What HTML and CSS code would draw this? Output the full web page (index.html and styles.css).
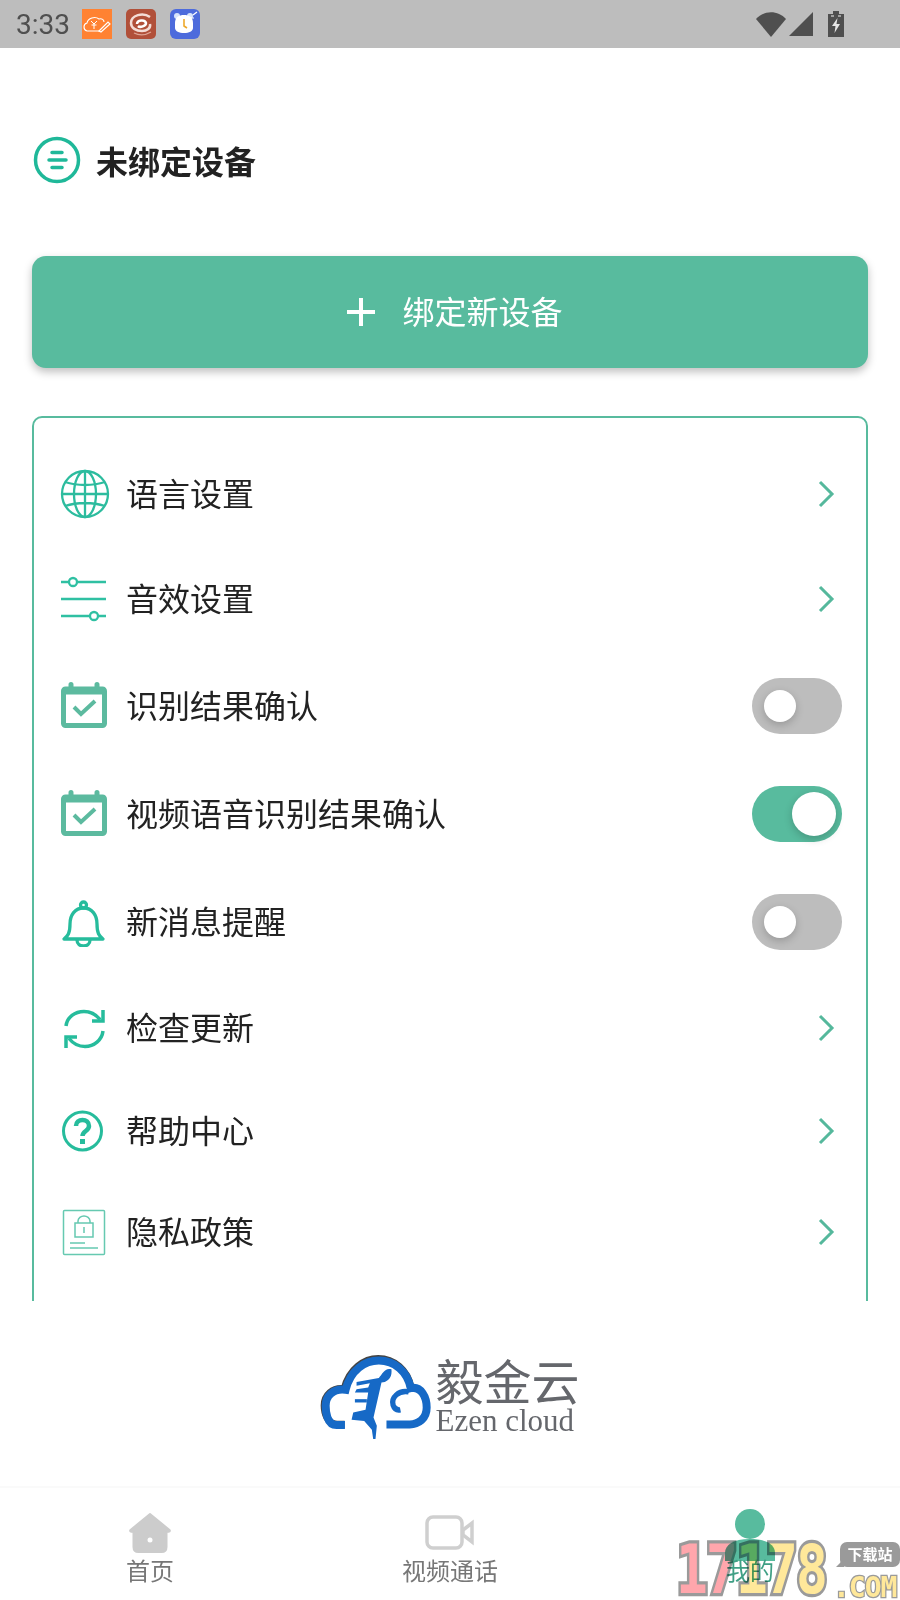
FILE: index.html
```html
<!DOCTYPE html>
<html lang="zh-CN">

<head>
    <meta charset="UTF-8">
    <meta name="viewport" content="width=device-width, initial-scale=1.0">
    <title>我的</title>
    <link rel="stylesheet" href="styles.css">
</head>

<body>
    <div class="status-bar">
        <span class="hora">3:33</span>
        <svg class="app-icon" viewBox="0 0 30 30">
            <rect width="30" height="30" fill="#ff8232"/>
            <path d="M5 22C1 21 1 15 5 14c1-5 8-7 12-4 3-1 5 1 5 3M5 22h13" fill="none" stroke="#fff" stroke-width="1.1"/>
            <path d="M9 12l3 3 3-3M12 15v5M9.500 16h5" fill="none" stroke="#fff" stroke-width="1"/>
            <path d="M17 22l9-9 2 2-9 8z" fill="none" stroke="#fff" stroke-width="1.2"/>
        </svg>
        <svg class="app-icon" viewBox="0 0 30 30">
            <rect width="30" height="30" rx="5" fill="#b15039"/>
            <path d="M24 8C17 3 5 6 5 14c0 5 5 8 11 8 5 0 9-3 8-7" fill="none" stroke="#f4dcd5" stroke-width="2.5"/>
            <path d="M11 15c0-4 8-5 9-1 0 3-6 5-8 3" fill="none" stroke="#fff" stroke-width="2.5"/>
            <path d="M8 24c6 3 12 2 17-1" fill="none" stroke="#e0a594" stroke-width="1.3"/>
        </svg>
        <svg class="app-icon" viewBox="0 0 30 30">
            <rect width="30" height="30" rx="6" fill="#4d6bdc"/>
            <circle cx="7" cy="7" r="3" fill="#d8e4fb"/>
            <circle cx="20" cy="7" r="3" fill="#d8e4fb"/>
            <path d="M5 14c0-6 4-8 9-8s9 2 9 8v5c0 3-4 5-9 5s-9-2-9-5z" fill="#fff"/>
            <path d="M14 10v7l3 2" fill="none" stroke="#eea92c" stroke-width="1.6"/>
            <path d="M23 6l4-3M21 9h3" stroke="#fff" stroke-width="1.2"/>
        </svg>
        <div class="status-right">
            <svg width="30" height="25" viewBox="0 0 30 25"><path d="M0 7C8-2 22-2 30 7L15 25z" fill="#4f4f4f"/></svg>
            <svg class="sinal" width="24" height="24" viewBox="0 0 24 24"><path d="M24 0v24H0z" fill="#4f4f4f"/></svg>
            <svg class="bateria" width="16" height="26" viewBox="0 0 16 26">
                <path d="M5 0h6v3h5v23H0V3h5z" fill="#4f4f4f"/>
                <path d="M3 5h3M10 5h3" stroke="#bdbdbd" stroke-width="1.5"/>
                <path d="M9.500 7L4 15h3.500L6.500 22 12 13H8.500z" fill="#e6e6e6"/>
            </svg>
        </div>
    </div>

    <div class="cabecalho">
        <svg width="48" height="48" viewBox="0 0 48 48">
            <path d="M24 2.500C36 2.500 45.500 12 45.500 24S36 45.500 24 45.500 2.500 36 2.500 24 12 2.500 24 2.500z" fill="none" stroke="#1fb899" stroke-width="3.500"/>
            <path d="M19 16.500h10M16 24h17M19 31.500h10" fill="none" stroke="#1fb899" stroke-width="3.500" stroke-linecap="round"/>
        </svg>
        <h1>未绑定设备</h1>
    </div>

    <button class="botao-novo"><span class="mais"></span>绑定新设备</button>

    <div class="area-lista">
        <div class="lista">
            <div class="item item-a">
                <svg class="icone" viewBox="0 0 50 50" fill="none" stroke="#2cbc9e" stroke-width="2.300">
                    <circle cx="25" cy="25" r="23"/>
                    <ellipse cx="25" cy="25" rx="11" ry="23"/>
                    <path d="M25 2v46M2 25h46M5 13c12 4 28 4 40 0M5 37c12-4 28-4 40 0"/>
                </svg>
                <span class="texto">语言设置</span>
                <svg class="seta" viewBox="0 0 18 28"><path d="M3 2l12 12L3 26" fill="none" stroke="#55b89c" stroke-width="3"/></svg>
            </div>
            <div class="item item-b">
                <svg class="icone" viewBox="0 0 50 50" fill="none" stroke="#2fc0a2" stroke-width="2.300">
                    <path d="M1 8h8M17 8h29M1 25h45M1 42h29M38 42h8"/>
                    <circle cx="13" cy="8" r="4"/>
                    <circle cx="34" cy="42" r="4"/>
                </svg>
                <span class="texto">音效设置</span>
                <svg class="seta" viewBox="0 0 18 28"><path d="M3 2l12 12L3 26" fill="none" stroke="#55b89c" stroke-width="3"/></svg>
            </div>
            <div class="item item-c">
                <svg class="icone" viewBox="0 0 50 50" fill="none" stroke="#5cba9f">
                    <path d="M11 3.500v6M37 3.500v6" stroke-width="5" stroke-linecap="round"/>
                    <rect x="3.500" y="8" width="41" height="36.500" rx="2" stroke-width="5"/>
                    <path d="M3 10h42" stroke-width="7"/>
                    <path d="M14 26l7 7 14-13" stroke-width="4"/>
                </svg>
                <span class="texto">识别结果确认</span>
                <span class="chave"><span class="bolinha"></span></span>
            </div>
            <div class="item item-c">
                <svg class="icone" viewBox="0 0 50 50" fill="none" stroke="#5cba9f">
                    <path d="M11 3.500v6M37 3.500v6" stroke-width="5" stroke-linecap="round"/>
                    <rect x="3.500" y="8" width="41" height="36.500" rx="2" stroke-width="5"/>
                    <path d="M3 10h42" stroke-width="7"/>
                    <path d="M14 26l7 7 14-13" stroke-width="4"/>
                </svg>
                <span class="texto">视频语音识别结果确认</span>
                <span class="chave ligada"><span class="bolinha"></span></span>
            </div>
            <div class="item item-c">
                <svg class="icone" viewBox="0 0 50 50" fill="none" stroke="#26bc9c" stroke-width="3.300">
                    <circle cx="23.500" cy="8" r="3"/>
                    <path d="M4 42c4-3 6-6 6-15 0-9 5-16 13.500-16S37 18 37 27c0 9 2 12 6 15z" stroke-linejoin="round"/>
                    <path d="M17 43c0 4 3 6 6.500 6s6.500-2 6.500-6"/>
                </svg>
                <span class="texto">新消息提醒</span>
                <span class="chave"><span class="bolinha"></span></span>
            </div>
            <div class="item item-a">
                <svg class="icone" viewBox="0 0 50 50" fill="none" stroke="#26bc9c" stroke-width="3.500">
                    <path d="M6 23C7 14 15 8.500 24 8.500c7 0 12 3 16 8M43 28c-1 9-9 15.500-18 15.500-7 0-12-3-16-8"/>
                    <path d="M43 7v11H32M6 45V34h11"/>
                </svg>
                <span class="texto">检查更新</span>
                <svg class="seta" viewBox="0 0 18 28"><path d="M3 2l12 12L3 26" fill="none" stroke="#55b89c" stroke-width="3"/></svg>
            </div>
            <div class="item item-d">
                <svg class="icone" viewBox="0 0 50 50" fill="none" stroke="#26bc9c" stroke-width="3">
                    <circle cx="22.500" cy="25" r="19"/>
                    <path d="M16 20c0-4 3-6 6.500-6s6.500 2 6.500 6c0 5-6.500 5-6.500 10" stroke-width="4.500"/>
                    <path d="M22.500 33v5" stroke-width="5"/>
                </svg>
                <span class="texto">帮助中心</span>
                <svg class="seta" viewBox="0 0 18 28"><path d="M3 2l12 12L3 26" fill="none" stroke="#55b89c" stroke-width="3"/></svg>
            </div>
            <div class="item item-d">
                <svg class="icone" viewBox="0 0 50 50" fill="none" stroke="#66c9b1" stroke-width="1.500">
                    <rect x="3.500" y="3.500" width="41" height="44" rx="1"/>
                    <rect x="15" y="16" width="18" height="14"/>
                    <path d="M18 16v-2c0-3 3-5 6-5s6 2 6 5v2M24 20v6M10 36h15M10 41h28"/>
                </svg>
                <span class="texto">隐私政策</span>
                <svg class="seta" viewBox="0 0 18 28"><path d="M3 2l12 12L3 26" fill="none" stroke="#55b89c" stroke-width="3"/></svg>
            </div>
        </div>
    </div>

    <div class="marca">
        <svg class="nuvem" width="113" height="87" viewBox="55 65 340 260" fill="none">
            <path d="M127 274H105C75 274 66 238 66 217C66 187 91 162 126 167C141 107 186 76 228 76C276 76 316 111 326 161" stroke="#444" stroke-width="22" transform="translate(2 2)"/>
            <path d="M130 278H105C75 278 72 235 72 220C72 190 95 167 132 172C147 112 190 84 232 84C280 84 318 117 328 167C360 160 376 195 376 225C376 260 350 276 325 276H255" stroke="#1669c6" stroke-width="24"/>
            <path d="M322 178C292 172 268 195 275 218C279 230 287 234 297 232" stroke="#1669c6" stroke-width="16"/>
            <path d="M165 148L232 136C243 124 250 104 270 110C272 130 265 142 250 148L240 150L216 255L226 280L222 320L215 320L211 292L188 266L150 262L155 240L192 232L200 180L160 180L165 170L200 165L205 152L165 160z" fill="#1669c6"/>
            <path d="M160 205h36" stroke="#1669c6" stroke-width="10"/>
        </svg>
        <div class="marca-texto">
            <span class="marca-nome">毅金云</span>
            <span class="marca-en">Ezen cloud</span>
        </div>
    </div>

    <nav class="abas">
        <div class="aba">
            <svg class="aba-icone" width="44" height="41" viewBox="0 0 44 41">
                <path d="M22 2L41.500 18c1 1 0 2-3 2v15c0 3-1 5-5 5h-23c-4 0-5-2-5-5V20c-3 0-4-1-3-2z" fill="#cccccc" stroke="#cccccc" stroke-width="2" stroke-linejoin="round"/>
                <circle cx="22" cy="28" r="2.500" fill="#fff"/>
            </svg>
            <span>首页</span>
        </div>
        <div class="aba">
            <svg class="aba-icone video" width="50" height="35" viewBox="0 0 50 35" fill="none" stroke="#cfcfcf" stroke-width="3.500">
                <rect x="2" y="2" width="35" height="31" rx="6"/>
                <path d="M38 15l9-7v19l-9-7z"/>
            </svg>
            <span>视频通话</span>
        </div>
        <div class="aba aba-ativa">
            <svg class="aba-icone pessoa" width="50" height="52" viewBox="0 0 50 52">
                <circle cx="25" cy="15" r="15" fill="#58bb9e"/>
                <path d="M0 52V44C0 36 8 30 25 30s25 6 25 14v8z" fill="#58bb9e"/>
            </svg>
            <span>我的</span>
        </div>
    </nav>

    <div class="selo">
        <div class="selo-digitos">
            <span class="selo-num rosa">1</span>
            <span class="selo-num rosa">7</span>
            <span class="selo-num">1</span>
            <span class="selo-num">7</span>
            <span class="selo-num">8</span>
        </div>
        <span class="selo-baixar">下载站</span>
        <span class="selo-com">.COM</span>
    </div>
</body>

</html>
```

FILE: styles.css
```css
* {
    box-sizing: border-box;
}

body {
    font-family: "Noto Sans CJK SC", "Noto Sans", sans-serif;
    margin: 0;
    width: 900px;
    height: 1600px;
    overflow: hidden;
    position: relative;
    background-color: #fff;
    color: #222;
}

.status-bar {
    height: 48px;
    background-color: #bdbdbd;
    display: flex;
    align-items: center;
    padding: 0 56px 0 16px;
}

.hora {
    font-family: Roboto, sans-serif;
    font-size: 28px;
    color: #4f4f4f;
    width: 66px;
}

.app-icon {
    width: 30px;
    height: 30px;
    margin-right: 14px;
}

.status-right {
    margin-left: auto;
    display: flex;
    align-items: center;
}

.sinal {
    margin-left: 3px;
}

.bateria {
    margin-left: 15px;
}

.cabecalho {
    height: 136px;
    padding: 88px 0 0 33px;
    display: flex;
    align-items: center;
    gap: 15px;
}

.cabecalho h1 {
    margin: 0;
    font-size: 32px;
    font-weight: 700;
}

.botao-novo {
    display: flex;
    align-items: center;
    justify-content: center;
    width: 836px;
    height: 112px;
    margin: 72px 0 0 32px;
    padding: 0 0 4px 10px;
    background-color: #58bb9e;
    color: #fff;
    font-family: inherit;
    font-size: 32px;
    border: none;
    border-radius: 14px;
    box-shadow: 0 4px 8px rgba(0, 0, 0, 0.25);
}

.mais {
    width: 28px;
    height: 28px;
    margin: 4px 27px 0 0;
    background:
        linear-gradient(#fff, #fff) center / 100% 4px no-repeat,
        linear-gradient(#fff, #fff) center / 4px 100% no-repeat;
}

.area-lista {
    height: 885px;
    margin: 48px 32px 0;
    overflow: hidden;
}

.lista {
    height: 960px;
    border: 2px solid #58bb9e;
    border-radius: 10px;
    padding: 24px 24px 0 26px;
}

.item {
    display: flex;
    align-items: center;
    font-size: 32px;
}

.item-a {
    height: 104px;
}

.item-b {
    height: 106px;
}

.item-c {
    height: 108px;
}

.item-d {
    height: 101px;
}

.icone {
    width: 50px;
    height: 50px;
    margin-right: 16px;
    flex-shrink: 0;
}

.texto {
    flex: 1;
    padding-bottom: 4px;
}

.seta {
    width: 18px;
    height: 28px;
    margin-right: 7px;
}

.chave {
    width: 90px;
    height: 56px;
    border-radius: 28px;
    background-color: #bdbdbd;
    display: flex;
    align-items: center;
    padding-left: 12px;
}

.bolinha {
    width: 32px;
    height: 32px;
    border-radius: 50%;
    background-color: #fff;
    box-shadow: 0 3px 8px rgba(0, 0, 0, 0.2);
}

.chave.ligada {
    background-color: #58bb9e;
    padding-left: 40px;
}

.ligada .bolinha {
    width: 44px;
    height: 44px;
}

.marca {
    height: 187px;
    display: flex;
    align-items: flex-start;
    justify-content: center;
    padding-top: 53px;
    border-bottom: 2px solid #fafafa;
}

.nuvem {
    margin-right: 2px;
}

.marca-texto {
    display: flex;
    flex-direction: column;
    color: #65676c;
}

.marca-nome {
    font-size: 48px;
    line-height: 50px;
}

.marca-en {
    font-family: "Liberation Serif", serif;
    font-size: 31px;
    line-height: 34px;
}

.abas {
    display: flex;
    height: 112px;
}

.aba {
    flex: 1;
    display: flex;
    flex-direction: column;
    align-items: center;
    justify-content: flex-end;
    padding-bottom: 14px;
    font-size: 24px;
    line-height: 32px;
    color: #777;
}

.aba-icone {
    margin-bottom: 1px;
}

.aba-icone.video {
    margin-bottom: 4px;
}

.aba-icone.pessoa {
    margin-bottom: -7px;
}

.aba-ativa {
    color: #3f9f85;
}

.selo {
    position: absolute;
    left: 676px;
    top: 1540px;
    width: 224px;
    height: 60px;
    mix-blend-mode: multiply;
}

.selo-digitos {
    display: flex;
    height: 60px;
}

.selo-num {
    font-family: "DejaVu Sans Mono", monospace;
    font-weight: 700;
    font-size: 54px;
    line-height: 60px;
    color: #ffe89a;
    -webkit-text-stroke: 5px #9a9a9a;
    paint-order: stroke fill;
    width: 30px;
    transform: scale(0.98, 1.26);
    transform-origin: left center;
}

.selo-num.rosa {
    color: #ffa6ac;
}

.selo-baixar {
    position: absolute;
    right: 0;
    top: 2px;
    width: 60px;
    height: 25px;
    background-color: #9a9a9a;
    border-radius: 7px;
    color: #fff;
    font-size: 15px;
    font-weight: 700;
    line-height: 24px;
    text-align: center;
}

.selo-baixar::after {
    content: "";
    position: absolute;
    left: -4px;
    bottom: 0;
    border-top: 8px solid transparent;
    border-right: 8px solid #9a9a9a;
}

.selo-com {
    position: absolute;
    right: -3px;
    bottom: 0;
    width: 70px;
    font-family: "DejaVu Sans Mono", monospace;
    font-weight: 700;
    font-size: 28px;
    line-height: 24px;
    letter-spacing: -1px;
    color: #ffe89a;
    -webkit-text-stroke: 2.5px #9a9a9a;
    paint-order: stroke fill;
}
```
